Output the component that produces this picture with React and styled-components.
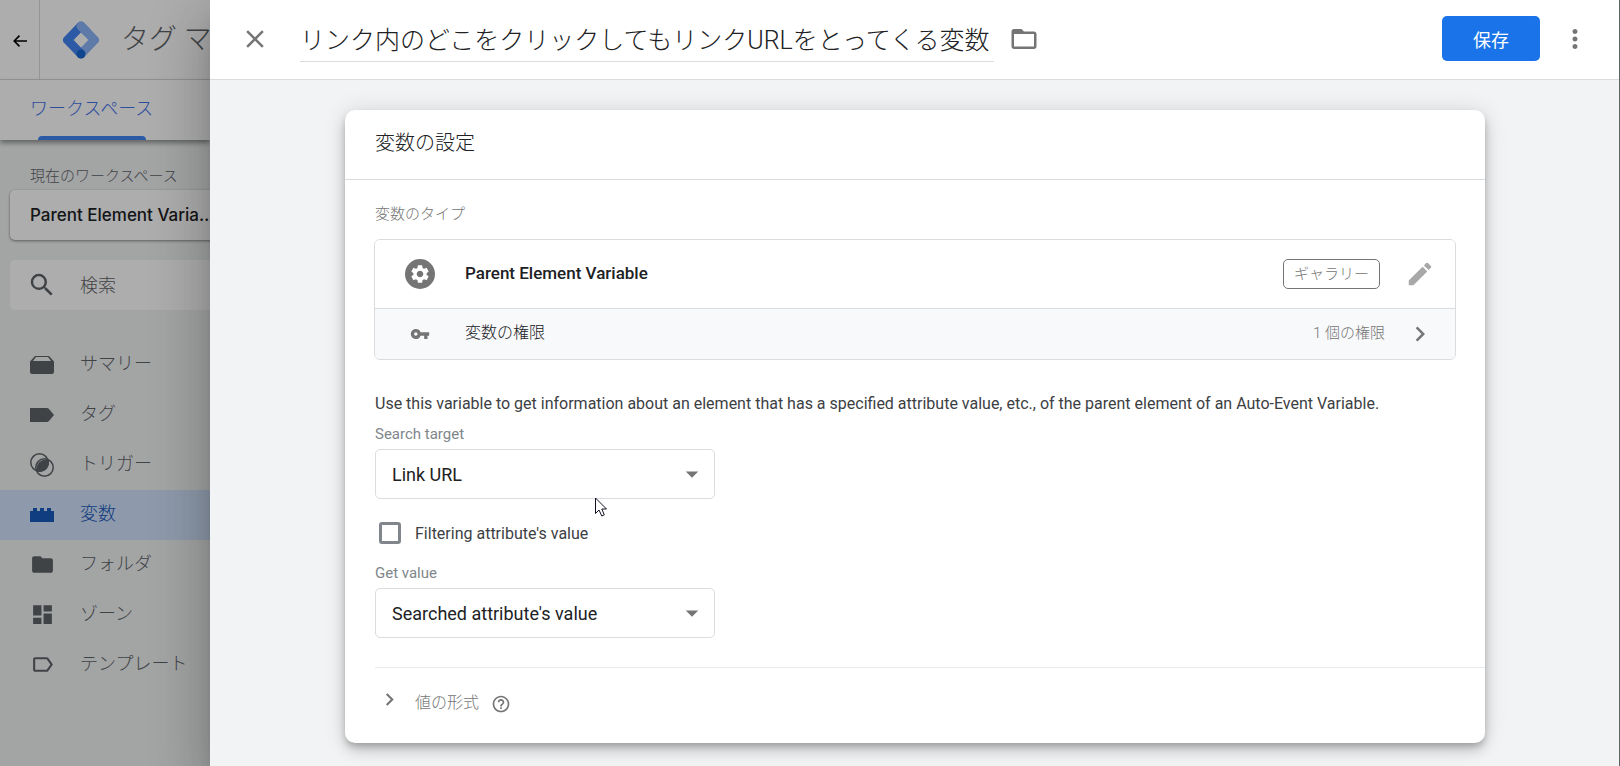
import { useState } from "react";
import {
  MdArrowDropDown,
  MdChevronRight,
  MdClose,
  MdDashboard,
  MdEdit,
  MdFolder,
  MdFolderOpen,
  MdHelpOutline,
  MdLabelOutline,
  MdMoreVert,
  MdSearch,
  MdSettings,
  MdVpnKey,
} from "react-icons/md";
import styled, { createGlobalStyle } from "styled-components";

const GlobalStyle = createGlobalStyle`
  *, *::before, *::after {
    box-sizing: border-box;
  }

  body {
    margin: 0;
    background: #f1f3f4;
    color: #202124;
    font-family: Roboto, "Noto Sans CJK JP", sans-serif;
    font-size: 16px;
    font-weight: 300;
  }

  button, input, select {
    margin: 0;
    font: inherit;
    color: inherit;
  }

  svg {
    display: block;
    flex: none;
  }
`;

const Shell = styled.div`
  display: flex;
  min-height: 100vh;
`;

/* page under the sheet */

const Page = styled.div`
  position: relative;
  flex: none;
  width: 210px;
  overflow: hidden;
  background: #f1f3f4;

  &::after {
    content: "";
    position: absolute;
    inset: 0;
    background: rgba(0, 0, 0, 0.32);
    pointer-events: none;
  }
`;

const PageHeader = styled.header`
  display: flex;
  height: 80px;
  background: #fff;
  border-bottom: 1px solid #dadce0;
`;

const BackButton = styled.button`
  display: grid;
  place-items: center;
  flex: none;
  width: 40px;
  padding: 2px 0 0;
  background: none;
  border: 0;
  border-right: 1px solid #dadce0;
  color: #000;
`;

const Brand = styled.a`
  display: flex;
  align-items: center;
  gap: 22px;
  padding-left: 23px;
  color: #5f6368;
  font-size: 28px;
  line-height: 40px;
  white-space: nowrap;
  text-decoration: none;
`;

const Tabs = styled.nav`
  display: flex;
  height: 60px;
  padding: 0 30px;
  background: #fff;
  box-shadow: 0 3px 5px rgba(0, 0, 0, 0.4);
`;

const Tab = styled.a`
  position: relative;
  padding-top: 14px;
  color: #4372e8;
  font-size: 18px;
  line-height: 30px;
  white-space: nowrap;
  text-decoration: none;

  &::after {
    content: "";
    position: absolute;
    right: 7px;
    bottom: 0;
    left: 8px;
    height: 4px;
    background: #4285f4;
    border-radius: 4px 4px 0 0;
  }
`;

const SideLabel = styled.div`
  padding: 25px 0 3px 30px;
  color: #5f6368;
  font-size: 15px;
  line-height: 22px;
  white-space: nowrap;
`;

const WorkspaceButton = styled.button`
  display: block;
  width: 240px;
  height: 50px;
  margin-left: 10px;
  padding: 0 20px;
  background: #fff;
  border: 0;
  border-radius: 5px;
  box-shadow: 0 1px 3px rgba(0, 0, 0, 0.45);
  color: #202124;
  font-family: Inter, sans-serif;
  font-size: 17px;
  font-weight: 500;
  text-align: left;
  white-space: nowrap;
`;

const SearchBox = styled.label`
  display: flex;
  align-items: center;
  gap: 23px;
  width: 240px;
  height: 50px;
  margin: 20px 0 30px 10px;
  padding-left: 17px;
  background: #fff;
  border-radius: 5px;
  color: #5f6368;
  font-size: 18px;

  input {
    width: 130px;
    padding: 0;
    background: none;
    border: 0;
    outline: 0;
  }

  input::placeholder {
    color: #5f6368;
    opacity: 1;
  }
`;

const NavList = styled.ul`
  margin: 0;
  padding: 0;
  list-style: none;
`;

const NavLink = styled.a`
  display: grid;
  grid-template-columns: 25px 1fr;
  align-items: center;
  gap: 25px;
  height: 50px;
  padding: 0 0 2px 30px;
  background: ${({ $active }) => ($active ? "#d2e3fc" : "transparent")};
  color: ${({ $active }) => ($active ? "#185abc" : "#5f6368")};
  font-size: 18px;
  line-height: 30px;
  white-space: nowrap;
  text-decoration: none;

  svg {
    margin-top: 1px;
  }
`;

/* sheet */

const Sheet = styled.main`
  position: relative;
  flex: 1;
  min-width: 0;
  background: #f1f3f4;
  box-shadow:
    0 14px 18px -8px rgba(0, 0, 0, 0.2),
    0 30px 48px 4px rgba(0, 0, 0, 0.14),
    0 12px 56px 10px rgba(0, 0, 0, 0.12);

  /* window edge */
  &::after {
    content: "";
    position: absolute;
    inset: 0 0 0 auto;
    width: 1px;
    background: #5f6368;
  }
`;

const SheetHeader = styled.header`
  display: flex;
  align-items: center;
  height: 80px;
  padding: 0 30px 2px;
  background: #fff;
  border-bottom: 1px solid #dadce0;
`;

const IconButton = styled.button`
  display: grid;
  place-items: center;
  flex: none;
  padding: 0;
  background: none;
  border: 0;
  color: ${({ $color }) => $color || "#757575"};
  cursor: pointer;
`;

const TitleInput = styled.input`
  field-sizing: content;
  height: 46px;
  margin: 0 15px 0 30px;
  padding: 0 4px 0 0;
  background: none;
  border: 0;
  border-bottom: 1px solid #dadce0;
  outline: 0;
  font-size: 25px;
`;

const SheetActions = styled.div`
  display: flex;
  align-items: center;
  gap: 20px;
  margin-left: auto;
`;

const SaveButton = styled.button`
  height: 45px;
  padding: 0 31px;
  background: #1a73e8;
  border: 0;
  border-radius: 5px;
  color: #fff;
  font-size: 18px;
  font-weight: 400;
  cursor: pointer;
`;

const SheetBody = styled.div`
  padding: 30px 30px 20px;
`;

const Card = styled.section`
  max-width: 1140px;
  margin: 0 auto;
  background: #fff;
  border-radius: 10px;
  box-shadow:
    0 4px 6px -1px rgba(0, 0, 0, 0.2),
    0 8px 13px rgba(0, 0, 0, 0.14),
    0 1px 23px rgba(0, 0, 0, 0.12);
`;

const CardTitle = styled.h2`
  height: 70px;
  margin: 0;
  padding: 18px 30px 0;
  border-bottom: 1px solid #dadce0;
  font-size: 20px;
  line-height: 30px;
  font-weight: 300;
`;

const CardBody = styled.div`
  padding: 23px 30px 0;
`;

const TypeLabel = styled.div`
  color: #757575;
  font-size: 15px;
  line-height: 22px;
`;

const TypeBox = styled.div`
  margin: 14px -1px 32px;
  border: 1px solid #dadce0;
  border-radius: 6px;
  overflow: hidden;
`;

const TypeRow = styled.div`
  display: grid;
  grid-template-columns: 30px 1fr auto 30px;
  align-items: center;
  height: ${({ $shaded }) => ($shaded ? "51px" : "68px")};
  padding: 0 20px 0 30px;
  background: ${({ $shaded }) => ($shaded ? "#f8f9fb" : "#fff")};
  border-top: ${({ $shaded }) => ($shaded ? "1px solid #dadce0" : "0")};
`;

const RowIcon = styled.span`
  display: grid;
  place-items: center;
  width: 30px;
  height: 30px;
  border-radius: 50%;
  background: ${({ $filled }) => ($filled ? "#757575" : "none")};
  color: ${({ $filled }) => ($filled ? "#fff" : "#757575")};
`;

const RowName = styled.span`
  padding: 0 0 2px 30px;
  font-size: ${({ $medium }) => ($medium ? "17px" : "16px")};
  line-height: 24px;
  font-weight: ${({ $medium }) => ($medium ? 500 : 300)};
`;

const Badge = styled.span`
  margin-right: 25px;
  padding: 0 10px;
  border: 1px solid #757575;
  border-radius: 5px;
  color: #757575;
  font-size: 15px;
  line-height: 28px;
`;

const RowMeta = styled.span`
  margin-right: 20px;
  padding-bottom: 2px;
  color: #757575;
  font-size: 15px;
  line-height: 24px;
`;

const Description = styled.p`
  margin: 0;
  color: #3c4043;
  font-size: 16px;
  line-height: 24px;
  font-weight: 400;
`;

const Field = styled.div`
  margin-top: ${({ $spaced }) => ($spaced ? "17px" : "8px")};
`;

const FieldLabel = styled.label`
  display: block;
  padding-bottom: 5px;
  color: #80868b;
  font-size: 15px;
  line-height: 20px;
  font-weight: 400;
`;

const SelectWrap = styled.div`
  position: relative;
  width: 340px;
  max-width: 100%;

  select {
    display: block;
    width: 100%;
    height: 50px;
    padding: 0 40px 0 16px;
    appearance: none;
    background: #fff;
    border: 1px solid #dadce0;
    border-radius: 5px;
    color: #202124;
    font-size: 18px;
    font-weight: 400;
  }

  > svg {
    position: absolute;
    top: 10px;
    right: 8px;
    color: #757575;
    pointer-events: none;
  }
`;

const Cursor = styled.span`
  position: absolute;
  top: 48px;
  left: 220px;
  pointer-events: none;
`;

const CheckRow = styled.label`
  display: flex;
  align-items: center;
  gap: 14px;
  margin-top: 21px;
  padding-left: 4px;
  color: #3c4043;
  font-size: 16px;
  line-height: 24px;
  font-weight: 400;

  input {
    width: 22px;
    height: 22px;
    appearance: none;
    background: #fff;
    border: 3px solid #80868b;
    border-radius: 3px;
  }

  input:checked {
    background: #1a73e8;
    border-color: #1a73e8;
  }

  span {
    padding-top: 2px;
  }
`;

const FormatRow = styled.div`
  display: flex;
  align-items: center;
  height: 76px;
  margin: 29px 0 0 30px;
  padding-bottom: 4px;
  border-top: 1px solid #e8eaed;
  color: #757575;
`;

const FormatToggle = styled.button`
  display: flex;
  align-items: center;
  gap: 13px;
  padding: 0 12px 2px 2px;
  background: none;
  border: 0;
  font-size: 16px;
  line-height: 24px;
  cursor: pointer;

  svg {
    margin-bottom: 6px;
  }
`;

const BackArrow = () => (
  <svg width="14" height="12" viewBox="0 0 14 12" fill="none" stroke="currentColor" strokeWidth="1.6">
    <path d="M14 6H1.500M6.500 .600L1.200 6l5.300 5.400" />
  </svg>
);

const TagManagerLogo = () => (
  <svg width="36" height="38" viewBox="0 0 36 38">
    <path d="M18 5L31.500 19 18 33" fill="none" stroke="#8ab4f8" strokeWidth="9" strokeLinejoin="round" strokeLinecap="round" />
    <path d="M18 5L4.500 19 18 33" fill="none" stroke="#4285f4" strokeWidth="9" strokeLinejoin="round" strokeLinecap="butt" />
    <path d="M18 5l5 5" stroke="#8ab4f8" strokeWidth="9" strokeLinecap="round" />
    <circle cx="18" cy="33" r="4.500" fill="#1967d2" />
  </svg>
);

const SummaryIcon = () => (
  <svg width="25" height="18" viewBox="0 0 25 18" fill="currentColor">
    <path d="M0 5.500L5 0h14l5 5.500V16a2 2 0 0 1-2 2H2a2 2 0 0 1-2-2zM3 5h18l-3-4H6z" />
  </svg>
);

const TagIcon = () => (
  <svg width="25" height="14" viewBox="0 0 25 14" fill="currentColor">
    <path d="M0 0h17q1 0 2 1l5 6-5 6q-1 1-2 1H0z" />
  </svg>
);

const TriggerIcon = () => (
  <svg width="25" height="24" viewBox="0 0 25 24" fill="none" stroke="currentColor" strokeWidth="1.500">
    <circle cx="9.500" cy="9.500" r="8.700" />
    <circle cx="14.500" cy="14.500" r="8.700" />
    <path d="M18 7.500A8.700 8.700 0 0 1 7.500 18 8.700 8.700 0 0 1 18 7.500z" fill="currentColor" />
  </svg>
);

const VariableIcon = () => (
  <svg width="25" height="14" viewBox="0 0 25 14" fill="currentColor">
    <path d="M0 3h3V0h4v3h3V0h4v3h3V0h4v3h3v11H0z" />
  </svg>
);

const PointerArrow = () => (
  <svg width="13" height="20" viewBox="0 0 13 20">
    <path d="M.500 1v15.500L4 13l2.800 6 2.500-1.200L6.800 12H11.500z" fill="#fff" stroke="#101020" />
  </svg>
);

const navItems = [
  { title: "サマリー", icon: <SummaryIcon /> },
  { title: "タグ", icon: <TagIcon /> },
  { title: "トリガー", icon: <TriggerIcon /> },
  { title: "変数", icon: <VariableIcon />, active: true },
  { title: "フォルダ", icon: <MdFolder size={25} /> },
  { title: "ゾーン", icon: <MdDashboard size={25} /> },
  { title: "テンプレート", icon: <MdLabelOutline size={25} /> },
];

function Sidebar() {
  return (
    <Page>
      <PageHeader>
        <BackButton aria-label="戻る">
          <BackArrow />
        </BackButton>
        <Brand href="#">
          <TagManagerLogo />
          タグ マネージャー
        </Brand>
      </PageHeader>
      <Tabs>
        <Tab href="#workspace">ワークスペース</Tab>
      </Tabs>
      <SideLabel>現在のワークスペース</SideLabel>
      <WorkspaceButton>Parent Element Varia…</WorkspaceButton>
      <SearchBox>
        <MdSearch size={30} />
        <input type="text" placeholder="検索" aria-label="検索" />
      </SearchBox>
      <NavList>
        {navItems.map((item) => (
          <li key={item.title}>
            <NavLink href="#" $active={item.active}>
              {item.icon}
              {item.title}
            </NavLink>
          </li>
        ))}
      </NavList>
    </Page>
  );
}

export default function App() {
  const [title, setTitle] = useState("リンク内のどこをクリックしてもリンクURLをとってくる変数");
  const [filtering, setFiltering] = useState(false);

  return (
    <>
      <GlobalStyle />
      <Shell>
        <Sidebar />
        <Sheet>
          <SheetHeader>
            <IconButton aria-label="閉じる">
              <MdClose size={30} />
            </IconButton>
            <TitleInput
              aria-label="変数名"
              value={title}
              onChange={(e) => setTitle(e.target.value)}
            />
            <IconButton aria-label="フォルダ">
              <MdFolderOpen size={30} />
            </IconButton>
            <SheetActions>
              <SaveButton>保存</SaveButton>
              <IconButton aria-label="その他">
                <MdMoreVert size={30} />
              </IconButton>
            </SheetActions>
          </SheetHeader>

          <SheetBody>
            <Card>
              <CardTitle>変数の設定</CardTitle>
              <CardBody>
                <TypeLabel>変数のタイプ</TypeLabel>
                <TypeBox>
                  <TypeRow>
                    <RowIcon $filled>
                      <MdSettings size={22} />
                    </RowIcon>
                    <RowName $medium>Parent Element Variable</RowName>
                    <Badge>ギャラリー</Badge>
                    <IconButton $color="#a8a8a8" aria-label="編集">
                      <MdEdit size={30} />
                    </IconButton>
                  </TypeRow>
                  <TypeRow $shaded>
                    <RowIcon>
                      <MdVpnKey size={20} />
                    </RowIcon>
                    <RowName>変数の権限</RowName>
                    <RowMeta>1 個の権限</RowMeta>
                    <IconButton aria-label="権限を表示">
                      <MdChevronRight size={30} />
                    </IconButton>
                  </TypeRow>
                </TypeBox>

                <Description>
                  Use this variable to get information about an element that has a specified
                  attribute value, etc., of the parent element of an Auto-Event Variable.
                </Description>

                <Field>
                  <FieldLabel htmlFor="target">Search target</FieldLabel>
                  <SelectWrap>
                    <select id="target">
                      <option>Link URL</option>
                    </select>
                    <MdArrowDropDown size={30} />
                    <Cursor>
                      <PointerArrow />
                    </Cursor>
                  </SelectWrap>
                </Field>

                <CheckRow>
                  <input
                    type="checkbox"
                    checked={filtering}
                    onChange={(e) => setFiltering(e.target.checked)}
                  />
                  <span>Filtering attribute's value</span>
                </CheckRow>

                <Field $spaced>
                  <FieldLabel htmlFor="value">Get value</FieldLabel>
                  <SelectWrap>
                    <select id="value">
                      <option>Searched attribute's value</option>
                    </select>
                    <MdArrowDropDown size={30} />
                  </SelectWrap>
                </Field>
              </CardBody>

              <FormatRow>
                <FormatToggle aria-expanded="false">
                  <MdChevronRight size={25} />
                  値の形式
                </FormatToggle>
                <IconButton aria-label="ヘルプ">
                  <MdHelpOutline size={20} />
                </IconButton>
              </FormatRow>
            </Card>
          </SheetBody>
        </Sheet>
      </Shell>
    </>
  );
}
